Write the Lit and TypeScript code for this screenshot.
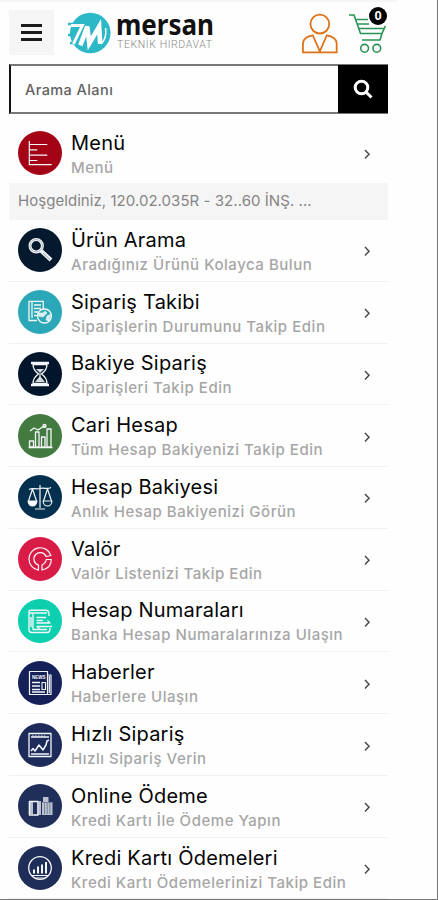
import { LitElement, html, svg, css } from "lit";
import { customElement, property } from "lit/decorators.js";

const icons: Record<string, unknown> = {
  menu: svg`<path d="M11.3 10V33.7H33.7M11.3 13.5H29.3M11.3 18.8H19.3M11.3 24.2H29.3M11.3 29.5H19.3" stroke-width="1.2"/>`,
  search: svg`<circle cx="18.2" cy="17.7" r="6.2" stroke-width="3"/><path d="M23.3 23L33 32" stroke-width="4"/><path d="M25 25L32 31.6" stroke="#8d98a3" stroke-width="1"/><circle cx="18.2" cy="17.7" r="6.2" stroke="#8d98a3" stroke-width=".7"/>`,
  order: svg`<path d="M19 30.500H11V11.3H25.3V19M14 11.3V28M16 15H23M16 18.5H23M16 22H20M16 25.5H19" stroke-width="1.300"/><circle cx="26.500" cy="26" r="7" stroke-width="1.300"/><path d="M20.500 23L25 23 27 21 29 23 25 27 20 26ZM33 24L29 26 28 30 31 31Z" fill="#d5eff2" stroke-width=".6"/>`,
  hourglass: svg`<path d="M13 11H31M13 33H31" stroke-width="2.6"/><path d="M15 12.5C15 18 18 20 20.5 22C17 24.5 15 27 15 31.5H29C29 27 27 24.5 23.500 22C26 20 29 18 29 12.500Z" stroke-width="1.3"/><path d="M18 17H26L22 21Z M22 24L27 30H17Z" fill="#d5dae0" stroke="none"/><path d="M22 21V25"/>`,
  bars: svg`<path d="M11.500 33V27H15.500V33ZM17.500 33V18H21V33ZM23.500 33V23H27V33ZM29 33V15H33V33ZM10.500 33.500H34.500M12 17L16 14 20 16 26 12 28 12.500" stroke-width="1.3"/><circle cx="26.500" cy="12" r="1.600"/>`,
  scales: svg`<path d="M22 10V33M17 34H27M11 14.500C15 12 18 15 22 13.500C26 12 29 15 33 12.500M14.500 14L10.500 26M14.500 14L18.500 26M29.500 14L25.500 26M29.500 14L33.500 26" stroke-width="1.2"/><path d="M10 26H19Q18.500 31 14.500 31Q10.500 31 10 26Z" fill="#fff"/><path d="M25 26H34Q33.500 31 29.500 31Q25.500 31 25 26Z"/>`,
  ring: svg`<path d="M33 18.500A11.300 11.300 0 1 0 20.500 33.200L20.500 28A6.300 6.300 0 1 1 28 19.500ZM33.300 22.500H28.200Q28 26 24 28V33Q33 31.500 33.300 22.500Z" stroke-width="1.2"/>`,
  bank: svg`<path d="M11 12.500Q11 11.300 13 11.300H28Q31 11.300 31 15.500V17M11 12V31Q11 33.500 14 33.500H29Q32 33.500 32 30V29M11 14H29M15 15V30.500H29M18.500 18.500H28M18.500 21.500H25M18.500 24H32L29.500 21.500M34 27.500H19L21.500 30M13 18V28" stroke-width="1.4"/>`,
  news: svg`<path d="M11.500 10.500H29.500V33.500H11.500ZM29.500 14H33V33.500H29.500M31.300 15V32" stroke-width="1.200"/><path d="M14 21.500H22M14 25H22M14 28.500H22M14 31H27" stroke-width="1.500"/><path d="M24 21.500H27.500V28.500H24Z"/><text x="14" y="18.300" font-size="4.500" font-weight="700" textLength="13.500" fill="#fff" stroke="none">NEWS</text>`,
  trend: svg`<path d="M11 10.500H33V33.500H11ZM13 14H31" stroke-width="1.300"/><path d="M14 13H27" stroke-dasharray="1.500 1.500"/><path d="M13 28L15 25.500 17 28 21 22 25 27 28 22 29 18 31 17M13 31H31" stroke-width="1.500"/>`,
  pay: svg`<path d="M11.500 17.500H20V31H11.500Z" stroke-width="1.600"/><path d="M12 18H15V30H12ZM21 17H23V31H21ZM24 18H34.500V31H24ZM25 13H30.500V18H25Z" fill="#bac2d1" stroke="none"/><path d="M26.500 19V30M29.200 19V30M31.900 19V30M24.500 18.500H34" stroke="#66718e" stroke-width=".8"/>`,
  chart: svg`<circle cx="22" cy="22" r="11.300" stroke-width="1.300"/><path d="M16 27.500V23.500M20 27.500V20.500M24 27.500V18.500M28 27.500V16" stroke-width="2"/><path d="M14 29.500H30M18 32H26"/>`,
};

interface Entry { icon: string; color: string; title: string; note: string }

const entries: Entry[] = [
  { icon: "search", color: "#04192e", title: "Ürün Arama", note: "Aradığınız Ürünü Kolayca Bulun" },
  { icon: "order", color: "#2ba8b7", title: "Sipariş Takibi", note: "Siparişlerin Durumunu Takip Edin" },
  { icon: "hourglass", color: "#02152a", title: "Bakiye Sipariş", note: "Siparişleri Takip Edin" },
  { icon: "bars", color: "#427a40", title: "Cari Hesap", note: "Tüm Hesap Bakiyenizi Takip Edin" },
  { icon: "scales", color: "#03304f", title: "Hesap Bakiyesi", note: "Anlık Hesap Bakiyenizi Görün" },
  { icon: "ring", color: "#d91c46", title: "Valör", note: "Valör Listenizi Takip Edin" },
  { icon: "bank", color: "#0bcfae", title: "Hesap Numaraları", note: "Banka Hesap Numaralarınıza Ulaşın" },
  { icon: "news", color: "#152058", title: "Haberler", note: "Haberlere Ulaşın" },
  { icon: "trend", color: "#1d2b5a", title: "Hızlı Sipariş", note: "Hızlı Sipariş Verin" },
  { icon: "pay", color: "#202e5a", title: "Online Ödeme", note: "Kredi Kartı İle Ödeme Yapın" },
  { icon: "chart", color: "#1f2d59", title: "Kredi Kartı Ödemeleri", note: "Kredi Kartı Ödemelerinizi Takip Edin" },
];

@customElement("menu-row")
class MenuRow extends LitElement {
  @property() icon = "";
  @property() color = "";
  @property() heading = "";
  @property() note = "";

  static styles = css`
    :host { display: flex; align-items: center; box-sizing: border-box; height: 61.77px; padding: 0 17px 0 9px; border-bottom: 1px solid #f1f1f1; }
    .disc { width: 44px; height: 44px; flex: none; }
    .icon { fill: none; stroke: #f4f7fa; stroke-width: 1.1; stroke-linejoin: round; font-family: "Liberation Sans", sans-serif; }
    .text { flex: 1; margin-left: 9px; padding-top: 2px; white-space: nowrap; }
    .heading { font-size: 20px; line-height: 26px; letter-spacing: 0.22px; color: #050505; }
    .note { font-size: 15px; line-height: 23px; font-weight: 500; letter-spacing: 0.53px; color: #a6a6a6; }
    .arrow { width: 8px; height: 12px; flex: none; margin-top: 2px; fill: none; stroke: #4c4c4c; stroke-width: 1.5; }
  `;

  render() {
    return html`
      <svg class="disc" viewBox="0 0 44 44">
        <circle cx="22" cy="22" r="22" fill=${this.color}></circle>
        <g class="icon">${icons[this.icon]}</g>
      </svg>
      <div class="text">
        <div class="heading">${this.heading}</div>
        <div class="note">${this.note}</div>
      </div>
      <svg class="arrow" viewBox="0 0 8 12"><path d="M2 2L6 6.200 2 10.400"/></svg>
    `;
  }
}

@customElement("app-root")
class AppRoot extends LitElement {
  static styles = css`
    :host { display: block; box-sizing: border-box; width: 438px; height: 900px; overflow: hidden; background: #fefefe; border-right: 1px solid #777; border-bottom: 1px solid #777; font-family: Inter, "Liberation Sans", sans-serif; }
    .edge { width: 397px; height: 2px; background: #f5f5f5; }
    .page { width: 379px; margin-left: 9px; }
    .header { display: flex; height: 62px; align-items: flex-start; }
    .burger { display: flex; flex-direction: column; justify-content: center; gap: 4px; box-sizing: border-box; width: 45px; height: 45px; margin-top: 8px; padding: 0 12px; background: #f5f5f5; }
    .line { height: 3px; background: #1b1b1b; }
    .logo { width: 46px; height: 44px; margin: 9px 0 0 12px; }
    .brand { margin: 7px 0 0 5px; width: 98px; }
    .name { display: block; width: 98px; height: 48px; overflow: visible; }
    .name-main { font: 600 28px Inter, sans-serif; font-family: "Noto Sans", sans-serif; font-weight: 700; fill: #111; }
    .name-sub { font: 300 10.5px Roboto, sans-serif; fill: #888; }
    .user { width: 36px; height: 42px; margin: 11px 0 0 88px; fill: none; stroke: #df7218; stroke-width: 1.8; }
    .cart { position: relative; margin: 10px 0 0 10px; width: 40px; height: 44px; }
    .cart-icon { width: 40px; height: 44px; fill: none; stroke: #279354; stroke-width: 1.6; }
    .count { position: absolute; left: 21px; top: -5px; width: 18px; height: 18px; border-radius: 50%; background: #000; color: #fff; font: 700 13px/18px "Liberation Sans", sans-serif; text-align: center; }
    .search { display: flex; box-sizing: border-box; width: 379px; height: 50px; border: 2px solid #777; border-left-color: #111; border-right: 0; }
    .field { flex: 1; padding-left: 14px; font-size: 14.500px; line-height: 47px; font-weight: 500; letter-spacing: 0.42px; color: #626262; }
    .go { display: flex; width: 50px; margin: -1px 0; align-items: center; justify-content: center; background: #000; }
    .glass { width: 20px; height: 20px; fill: none; stroke: #fff; stroke-width: 3; }
    .top { height: 69px; padding-top: 9px; border: 0; }
    .welcome { height: 37px; box-sizing: border-box; padding-left: 9px; background: #f5f5f5; font-size: 15px; line-height: 35px; letter-spacing: 0.05px; color: #858585; white-space: nowrap; }
  `;

  render() {
    return html`
      <div class="edge"></div>
      <div class="page">
        <div class="header">
          <div class="burger"><div class="line"></div><div class="line"></div><div class="line"></div></div>
          <svg class="logo" viewBox="0 0 46 44">
            <circle cx="24.500" cy="22" r="20.500" fill="#2db8c8"/>
            <path d="M2 13H9M5 18H11M2 24H7M4 32H8" stroke="#2db8c8" stroke-width="2.500" fill="none"/>
            <path d="M5 14.500H16.500L7.500 33" stroke="#fff" stroke-width="3" fill="none"/>
            <path d="M14.500 34.500L21.500 15.500L23.500 32.500L33.500 15.500L34.500 33" stroke="#fff" stroke-width="4.600" fill="none"/>
            <path d="M35 33Q41.500 28 40 17" stroke="#fff" stroke-width="1.500" fill="none"/>
          </svg>
          <div class="brand">
            <svg class="name" viewBox="0 0 98 48">
              <text class="name-main" x="0" y="26" textLength="98" lengthAdjust="spacingAndGlyphs">mersan</text>
              <text class="name-sub" x="1" y="38.500" textLength="95">TEKNİK HIRDAVAT</text>
            </svg>
          </div>
          <svg class="user" viewBox="0 0 36 42">
            <circle cx="18" cy="11" r="9.500"/>
            <path d="M1 39.500V30Q2 24 11 22.500L18 38.500 25 22.500Q34 24 35 30V39.500Z"/>
          </svg>
          <div class="cart">
            <svg class="cart-icon" viewBox="0 0 40 44">
              <path d="M1 3H6L12.500 21.500H34L37.300 14M8.500 7.500H20M10 12H21M11 16.500H36M14 28H32.500M34 21.500L32 28"/>
              <circle cx="16.600" cy="36.300" r="3.900"/><circle cx="28.800" cy="36.300" r="3.900"/>
            </svg>
            <div class="count">0</div>
          </div>
        </div>
        <div class="search">
          <div class="field">Arama Alanı</div>
          <div class="go"><svg class="glass" viewBox="0 0 20 20"><circle cx="8.500" cy="8.500" r="6.300"/><path d="M13 13L18.500 18.500"/></svg></div>
        </div>
        <menu-row class="top" icon="menu" color="#a30315" heading="Menü" note="Menü"></menu-row>
        <div class="welcome">Hoşgeldiniz, 120.02.035R - 32..60 İNŞ. ...</div>
        ${entries.map((e) => html`<menu-row icon=${e.icon} color=${e.color} heading=${e.title} note=${e.note}></menu-row>`)}
      </div>
    `;
  }
}
